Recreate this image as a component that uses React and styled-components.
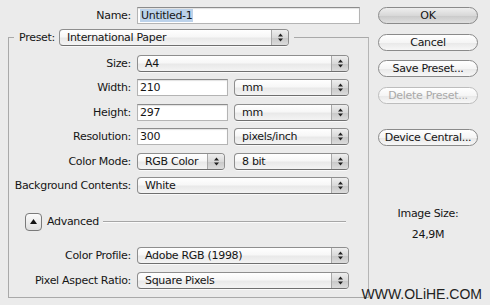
import React from "react"
import styled, { createGlobalStyle } from "styled-components"

const GlobalStyle = createGlobalStyle`
  html, body {
    margin: 0;
    padding: 0;
    background: #ebebeb;
  }
  body {
    font-family: "DejaVu Sans", "Liberation Sans", sans-serif;
    font-size: 11px;
    letter-spacing: -0.3px;
    color: #151515;
  }
`

const Window = styled.div`
  width: 490px;
  height: 305px;
  display: flex;
  overflow: hidden;
  background: #ebebeb;
`

const Main = styled.div`
  width: 378px;
  display: flex;
  flex-direction: column;
`

const NameRow = styled.div`
  display: flex;
  align-items: center;
  gap: 6px;
  margin-top: 7px;
`

const Label = styled.span`
  width: ${p => p.$width || 122}px;
  text-align: right;
  white-space: nowrap;
  line-height: 17px;
`

const TextField = styled.div`
  box-sizing: border-box;
  width: ${p => p.$width}px;
  height: 17px;
  background: #fff;
  border: 1px solid #b4b4b4;
  border-top-color: #8c8c8c;
  box-shadow: inset 0 1px 1px rgba(0, 0, 0, 0.12);
  padding-left: 2px;
  line-height: 15px;
  white-space: nowrap;
`

const Selection = styled.span`
  background: #bcd2ea;
  padding: 0 1px;
`

const Group = styled.fieldset`
  margin: 5px 0 0 8px;
  width: 350px;
  box-sizing: content-box;
  border: 1px solid #a9a9a9;
  border-right-color: #b5b5b5;
  padding: 9px 9px 8px 0;
  min-width: 0;
`

const Legend = styled.legend`
  display: flex;
  align-items: center;
  gap: 4px;
  margin-left: 5px;
  padding: 0 5px 0 4px;
`

const Form = styled.div`
  display: grid;
  grid-template-columns: 122px 212px;
  grid-auto-rows: 17px;
  column-gap: 6px;
  row-gap: ${p => p.$gap}px;
  align-items: center;
`

const Pair = styled.div`
  display: flex;
  justify-content: space-between;
`

const PopupBox = styled.div`
  box-sizing: border-box;
  width: ${p => (p.$width ? `${p.$width}px` : "100%")};
  height: 17px;
  display: flex;
  border: 1px solid #8e8e8e;
  border-bottom-color: #6f6f6f;
  border-radius: 4px;
  background: linear-gradient(#ffffff 0%, #f7f7f7 45%, #e9e9e9 55%, #f4f4f4 100%);
  box-shadow: 0 1px 0 rgba(255, 255, 255, 0.7);
  overflow: hidden;
`

const PopupText = styled.span`
  flex: 1;
  padding-left: 7px;
  line-height: 15px;
  white-space: nowrap;
  overflow: hidden;
`

const Arrows = styled.span`
  width: 16px;
  display: flex;
  align-items: center;
  justify-content: center;
  border-left: 1px solid #a8a8a8;
  background: linear-gradient(#eeeeee 0%, #d9d9d9 50%, #c9c9c9 55%, #dcdcdc 100%);
`

const Popup = ({ children, width }) => (
  <PopupBox $width={width}>
    <PopupText>{children}</PopupText>
    <Arrows>
      <svg width="7" height="9" viewBox="0 0 7 9">
        <path d="M3.5 0.5 L6 3.5 H1 Z M3.5 8.5 L6 5.5 H1 Z" fill="#222" />
      </svg>
    </Arrows>
  </PopupBox>
)

const AdvancedRow = styled.div`
  display: flex;
  align-items: center;
  margin: 19px 13px 16px 16px;
`

const Disclosure = styled.div`
  box-sizing: border-box;
  width: 17px;
  height: 18px;
  border: 1px solid #7a7a7a;
  border-radius: 4px;
  background: linear-gradient(#fbfbfb, #dedede);
  display: flex;
  align-items: center;
  justify-content: center;
`

const AdvancedText = styled.span`
  margin-left: 5px;
  line-height: 18px;
`

const Rule = styled.div`
  flex: 1;
  height: 0;
  margin-left: 4px;
  border-top: 1px solid #a6a6a6;
  border-bottom: 1px solid #fafafa;
`

const Side = styled.div`
  width: 100px;
  display: flex;
  flex-direction: column;
`

const Button = styled.div`
  box-sizing: border-box;
  height: 17px;
  margin-top: ${p => p.$top}px;
  border: 1px solid ${p => (p.$disabled ? "#bdbdbd" : "#8a8a8a")};
  border-radius: 9px;
  background: ${p =>
    p.$default
      ? "linear-gradient(#eeeeee 0%, #d8d8d8 50%, #cbcbcb 55%, #dfdfdf 100%)"
      : "linear-gradient(#ffffff 0%, #f5f5f5 50%, #e9e9e9 55%, #f7f7f7 100%)"};
  color: ${p => (p.$disabled ? "#a9a9a9" : "#151515")};
  text-align: center;
  line-height: 15px;
  white-space: nowrap;
`

const Info = styled.div`
  margin-top: ${p => p.$top}px;
  text-align: center;
  line-height: 14px;
`

const Watermark = styled.div`
  margin-top: auto;
  margin-bottom: 3px;
  margin-left: -20px;
  margin-right: -4px;
  text-align: right;
  white-space: nowrap;
  font-family: "Liberation Sans", sans-serif;
  font-size: 14px;
  letter-spacing: 0;
  color: #222;
`

export default function App() {
  return (
    <>
      <GlobalStyle />
      <Window>
        <Main>
          <NameRow>
            <Label $width={131}>Name:</Label>
            <TextField $width={223}>
              <Selection>Untitled-1</Selection>
            </TextField>
          </NameRow>
          <Group>
            <Legend>
              <Label $width={37}>Preset:</Label>
              <Popup width={230}>International Paper</Popup>
            </Legend>
            <Form $gap={7.4}>
              <Label>Size:</Label>
              <Popup>A4</Popup>
              <Label>Width:</Label>
              <Pair>
                <TextField $width={91}>210</TextField>
                <Popup width={115}>mm</Popup>
              </Pair>
              <Label>Height:</Label>
              <Pair>
                <TextField $width={91}>297</TextField>
                <Popup width={115}>mm</Popup>
              </Pair>
              <Label>Resolution:</Label>
              <Pair>
                <TextField $width={91}>300</TextField>
                <Popup width={115}>pixels/inch</Popup>
              </Pair>
              <Label>Color Mode:</Label>
              <Pair>
                <Popup width={88}>RGB Color</Popup>
                <Popup width={115}>8 bit</Popup>
              </Pair>
              <Label>Background Contents:</Label>
              <Popup>White</Popup>
            </Form>
            <AdvancedRow>
              <Disclosure>
                <svg width="7" height="5" viewBox="0 0 7 5">
                  <path d="M3.5 0 L7 5 H0 Z" fill="#111" />
                </svg>
              </Disclosure>
              <AdvancedText>Advanced</AdvancedText>
              <Rule />
            </AdvancedRow>
            <Form $gap={8}>
              <Label>Color Profile:</Label>
              <Popup>Adobe RGB (1998)</Popup>
              <Label>Pixel Aspect Ratio:</Label>
              <Popup>Square Pixels</Popup>
            </Form>
          </Group>
        </Main>
        <Side>
          <Button $top={7} $default>OK</Button>
          <Button $top={10}>Cancel</Button>
          <Button $top={9}>Save Preset...</Button>
          <Button $top={10} $disabled>Delete Preset...</Button>
          <Button $top={25}>Device Central...</Button>
          <Info $top={61}>Image Size:</Info>
          <Info $top={7}>24,9M</Info>
          <Watermark>WWW.OLiHE.COM</Watermark>
        </Side>
      </Window>
    </>
  )
}
